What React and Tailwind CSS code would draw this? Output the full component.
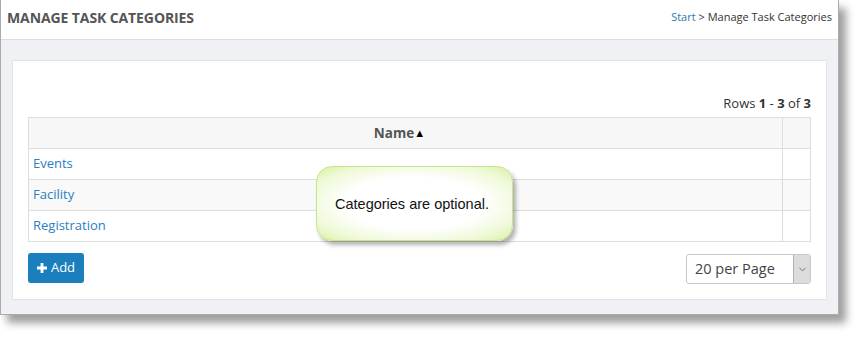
import { ChevronDown } from 'lucide-react';

const rows = ['Events', 'Facility', 'Registration'];

export default function App() {
  return (
    <div className="w-[864px] h-[341px] bg-white" style={{ fontFamily: '"Open Sans", sans-serif' }}>
      <div className="relative w-[839px] h-[315px] border border-t-0 border-[#ababab] bg-[#f0f1f4] shadow-[7px_8px_8px_rgba(0,0,0,0.38)]">
        {/* Header */}
        <div className="h-[40px] bg-white border-b border-[#dcdde0] flex justify-between px-[6px] pt-[7px]">
          <h1 className="text-[14px] font-bold text-[#555] tracking-[-0.1px]">MANAGE TASK CATEGORIES</h1>
          <div className="text-[11px] text-[#333] pt-[2px]">
            <span className="text-[#2a7ab5]">Start</span> &gt; Manage Task Categories
          </div>
        </div>

        {/* Body */}
        <div className="px-[11px] pt-[20px]">
          <div className="h-[240px] bg-white border border-[#e2e3e6] px-[15px] pt-[33px]">
            <div className="text-right text-[13px] text-[#333] h-[23px]">
              Rows <b>1</b> - <b>3</b> of <b>3</b>
            </div>
            <table className="w-full border-collapse text-[13px]">
              <thead>
                <tr className="bg-[#f7f7f7] h-[31px]">
                  <th className="border border-[#dddddd] text-[#555] font-bold text-[13.5px] pr-[12px]">
                    Name<span className="text-[11px] text-black align-[1px]">▲</span>
                  </th>
                  <th className="border border-[#dddddd] w-[28px]"></th>
                </tr>
              </thead>
              <tbody>
                {rows.map((r, i) => (
                  <tr key={r} className={i % 2 === 1 ? 'bg-[#f9f9f9] h-[31px]' : 'bg-white h-[31px]'}>
                    <td className="border border-[#dddddd] px-[4px] text-[#2a80c0]">{r}</td>
                    <td className="border border-[#dddddd]"></td>
                  </tr>
                ))}
              </tbody>
            </table>

            <div className="flex justify-between items-start mt-[11px]">
              <button className="h-[30px] w-[56px] rounded-[3px] bg-[#1b7fbd] text-white text-[13px] flex items-center justify-center gap-[4px]">
                <svg width="10" height="10" viewBox="0 0 10 10">
                  <path d="M3.6 0h2.8v3.6H10v2.8H6.4V10H3.6V6.4H0V3.6h3.6z" fill="white" />
                </svg>
                Add
              </button>
              <div className="mt-[1px] h-[30px] w-[125px] border border-[#c8c8c8] rounded-[3px] flex overflow-hidden">
                <div className="flex-1 flex items-center pl-[8px] text-[14.5px] text-[#444]">20 per Page</div>
                <div className="w-[17px] bg-[#dcdcdc] border-l border-[#b0b0b0] flex items-center justify-center">
                  <ChevronDown size={11} strokeWidth={1.5} className="text-[#444]" />
                </div>
              </div>
            </div>
          </div>
        </div>

        {/* Callout */}
        <div
          className="absolute left-[315px] top-[166px] w-[197px] h-[75px] rounded-[16px] border border-[#c7e58f] flex items-center pl-[18px] shadow-[3px_4px_4px_rgba(0,0,0,0.3)]"
          style={{ background: 'radial-gradient(ellipse at center, #ffffff 50%, #eef9d6 80%, #d8f0a0 100%)' }}
        >
          <span className="text-[14.5px] text-[#111] pt-[2px]" style={{ fontFamily: '"Liberation Sans", Arial, sans-serif' }}>
            Categories are optional.
          </span>
        </div>
      </div>
    </div>
  );
}
